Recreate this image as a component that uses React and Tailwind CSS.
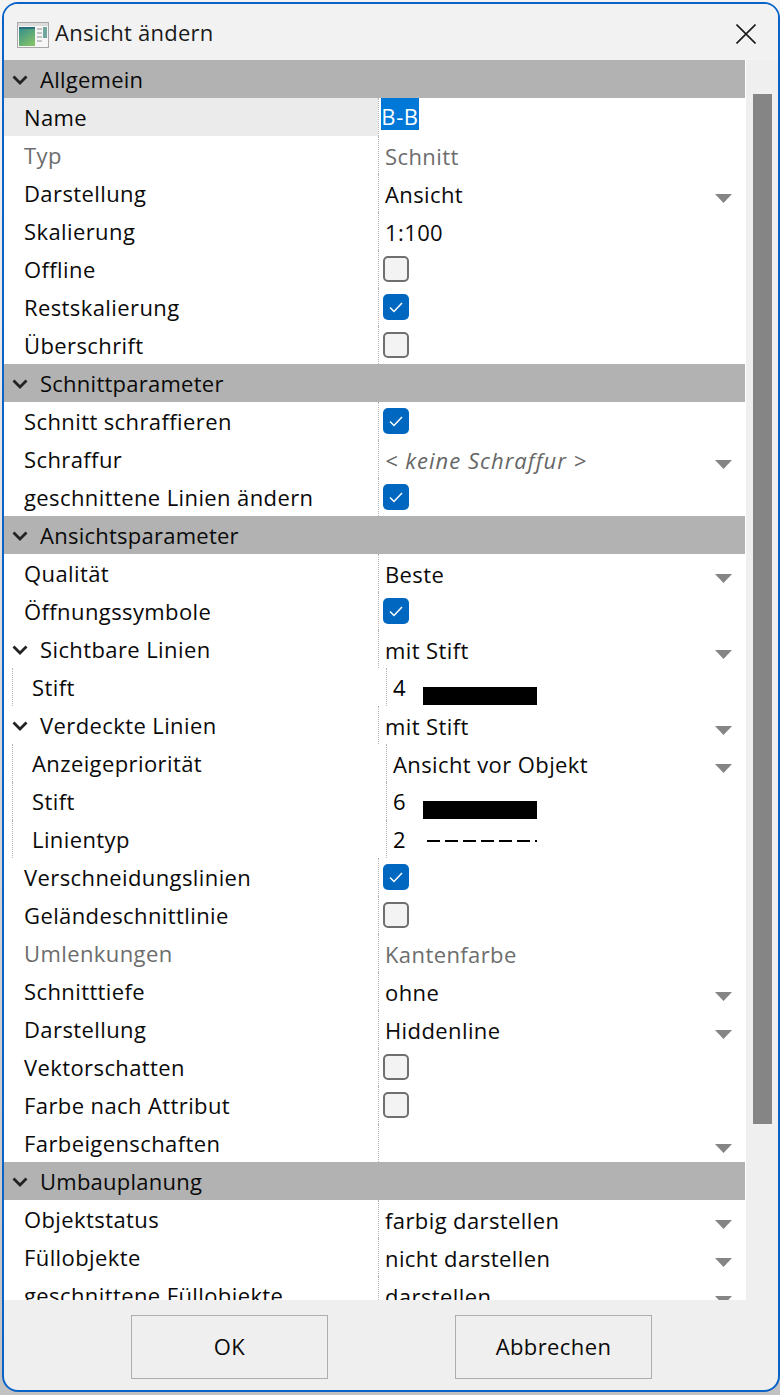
import React from 'react';

const rows = [
  { section: 'Allgemein' },
  { label: 'Name', selected: 'B-B', active: true },
  { label: 'Typ', value: 'Schnitt', disabled: true },
  { label: 'Darstellung', value: 'Ansicht', select: true },
  { label: 'Skalierung', value: '1:100' },
  { label: 'Offline', check: 'off' },
  { label: 'Restskalierung', check: 'on' },
  { label: 'Überschrift', check: 'off' },
  { section: 'Schnittparameter' },
  { label: 'Schnitt schraffieren', check: 'on' },
  { label: 'Schraffur', value: '< keine Schraffur >', italic: true, select: true },
  { label: 'geschnittene Linien ändern', check: 'on' },
  { section: 'Ansichtsparameter' },
  { label: 'Qualität', value: 'Beste', select: true },
  { label: 'Öffnungssymbole', check: 'on' },
  { label: 'Sichtbare Linien', value: 'mit Stift', select: true, group: true },
  { label: 'Stift', pen: '4', indent: true },
  { label: 'Verdeckte Linien', value: 'mit Stift', select: true, group: true },
  { label: 'Anzeigepriorität', value: 'Ansicht vor Objekt', select: true, indent: true },
  { label: 'Stift', pen: '6', indent: true },
  { label: 'Linientyp', dash: '2', indent: true },
  { label: 'Verschneidungslinien', check: 'on' },
  { label: 'Geländeschnittlinie', check: 'off' },
  { label: 'Umlenkungen', value: 'Kantenfarbe', disabled: true },
  { label: 'Schnitttiefe', value: 'ohne', select: true },
  { label: 'Darstellung', value: 'Hiddenline', select: true },
  { label: 'Vektorschatten', check: 'off' },
  { label: 'Farbe nach Attribut', check: 'off' },
  { label: 'Farbeigenschaften', select: true },
  { section: 'Umbauplanung' },
  { label: 'Objektstatus', value: 'farbig darstellen', select: true },
  { label: 'Füllobjekte', value: 'nicht darstellen', select: true },
  { label: 'geschnittene Füllobjekte', value: 'darstellen', select: true },
];

function Chevron() {
  return (
    <svg width="16" height="10" viewBox="0 0 16 10" className="shrink-0 mt-[1px]">
      <path d="M1.5 1.5 L8 8 L14.5 1.5" fill="none" stroke="#222222" strokeWidth="2.8" />
    </svg>
  );
}

function Check({ on }) {
  if (on) {
    return (
      <div className="w-[26px] h-[26px] rounded-[5px] bg-[#0067c0] flex items-center justify-center">
        <svg width="14" height="11" viewBox="0 0 14 11">
          <path d="M1 5.5 L5 9.5 L13 1" fill="none" stroke="#ffffff" strokeWidth="1.5" />
        </svg>
      </div>
    );
  }
  return <div className="w-[26px] h-[26px] rounded-[5px] bg-[#f3f3f3] border-2 border-[#6f6f6f]" />;
}

function Row({ row }) {
  const textColor = row.disabled ? 'text-[#6d6d6d]' : 'text-[#0a0a0a]';
  const valuePad = row.indent ? 'ml-[8px] pl-[6px]' : row.selected ? 'pl-[2px]' : row.check ? 'pl-[4px]' : 'pl-[6px]';
  return (
    <div className="flex h-[38px] shrink-0">
      <div className={`w-[374px] shrink-0 flex items-center ${row.active ? 'bg-[#ebebeb]' : ''} ${textColor}`}>
        {row.group ? (
          <div className="flex items-center pl-[8px]">
            <Chevron />
            <span className="ml-[12px]">{row.label}</span>
          </div>
        ) : row.indent ? (
          <div className="ml-[8px] pl-[19px] h-full flex items-center border-l border-dotted border-[#b5b5b5]">
            <span>{row.label}</span>
          </div>
        ) : (
          <span className="pl-[20px]">{row.label}</span>
        )}
      </div>
      <div className={`flex-1 min-w-0 flex items-center border-l border-dotted border-[#b5b5b5] ${valuePad}`}>
        {row.check && <Check on={row.check === 'on'} />}
        {row.value && (
          <span className={`mt-[2px] ${row.italic ? 'italic text-[#666666] tracking-[1px]' : textColor}`}>{row.value}</span>
        )}
        {row.selected && (
          <span className="self-start h-[32px] w-[38px] bg-[#0078d7] text-white leading-[36px] text-center tracking-[0.6px]">{row.selected}</span>
        )}
        {row.pen && (
          <div className="flex items-center h-full">
            <span className="w-[30px]">{row.pen}</span>
            <div className="w-[114px] h-[18px] bg-black mt-[18px]" />
          </div>
        )}
        {row.dash && (
          <div className="flex items-center h-full">
            <span className="w-[30px]">{row.dash}</span>
            <svg width="114" height="2" viewBox="0 0 114 2" className="mt-[4px]">
              <path d="M4 1 H114" stroke="#000000" strokeWidth="2" strokeDasharray="13 5" />
            </svg>
          </div>
        )}
        {row.select && (
          <svg width="17" height="9" viewBox="0 0 17 9" className="ml-auto mr-[13px] mt-[10px] shrink-0">
            <path d="M0 0 H17 L8.5 9 Z" fill="#858585" />
          </svg>
        )}
      </div>
    </div>
  );
}

function Section({ title }) {
  return (
    <div className="flex items-center h-[38px] shrink-0 bg-[#b2b2b2] pl-[8px] text-[#0a0a0a] tracking-[0.25px]">
      <Chevron />
      <span className="ml-[12px]">{title}</span>
    </div>
  );
}

export default function App() {
  return (
    <div className="w-[780px] h-[1395px] bg-linear-to-b from-[#f4f4f4] to-[#c2c2c2] font-['Open_Sans',sans-serif] text-[22px] tracking-[0.4px] overflow-hidden">
      <div className="ml-[2px] mt-[2px] w-[778px] h-[1390px] border-2 border-[#0a64c8] rounded-[16px] bg-[#efefef] flex flex-col overflow-hidden">
        {/* title bar */}
        <div className="h-[56px] shrink-0 bg-[#f2f2f2] flex items-center pl-[13px] pr-[22px]">
          <svg width="32" height="26" viewBox="0 0 32 26" className="mt-[5px]">
            <defs>
              <linearGradient id="pane" x1="0" y1="0" x2="0.6" y2="1">
                <stop offset="0" stopColor="#2f8a8e" />
                <stop offset="1" stopColor="#7fbf6a" />
              </linearGradient>
            </defs>
            <rect x="0.5" y="0.5" width="31" height="25" fill="#f6f6f6" stroke="#a8a8a8" />
            <rect x="1" y="1" width="30" height="3" fill="#dcdcdc" />
            <rect x="2" y="5" width="16" height="19" fill="url(#pane)" />
            <rect x="2" y="5" width="16" height="2" fill="#2c6f7c" />
            <rect x="20" y="6" width="5" height="2" fill="#c4c4c4" />
            <rect x="20" y="10" width="5" height="2" fill="#c4c4c4" />
            <rect x="20" y="14" width="5" height="2" fill="#c4c4c4" />
            <rect x="20" y="18" width="5" height="2" fill="#c4c4c4" />
            <rect x="26" y="5" width="4" height="11" fill="#6fa79c" />
          </svg>
          <span className="ml-[6px] text-[#1a1a1a] tracking-[0.25px]">Ansicht ändern</span>
          <svg width="20" height="20" viewBox="0 0 20 20" className="ml-auto mt-[4px]">
            <path d="M0.5 0.5 L19.5 19.5 M19.5 0.5 L0.5 19.5" stroke="#1a1a1a" strokeWidth="1.6" />
          </svg>
        </div>
        {/* property list + scrollbar */}
        <div className="flex-1 min-h-0 flex">
          <div className="w-[741px] shrink-0 bg-white flex flex-col overflow-hidden">
            {rows.map((row, idx) =>
              row.section ? <Section key={idx} title={row.section} /> : <Row key={idx} row={row} />
            )}
          </div>
          <div className="flex-1 border-l border-white pt-[34px] pl-[7px]">
            <div className="w-[19px] h-[1030px] bg-[#858585]" />
          </div>
        </div>
        {/* buttons */}
        <div className="h-[90px] shrink-0 flex items-start pt-[15px] pl-[127px] gap-[127px]">
          <button className="w-[197px] h-[64px] border border-[#adadad] text-[#0a0a0a] pb-[2px]">OK</button>
          <button className="w-[197px] h-[64px] border border-[#adadad] text-[#0a0a0a] pb-[2px]">Abbrechen</button>
        </div>
      </div>
    </div>
  );
}
